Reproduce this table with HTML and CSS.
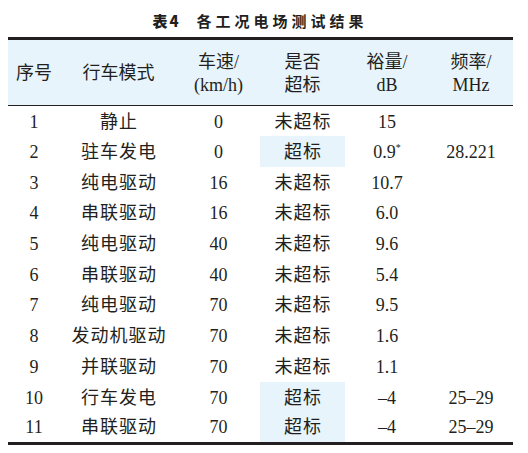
FILE: index.html
```html
<!DOCTYPE html>
<html lang="zh-CN">
<head>
  <meta charset="UTF-8">
  <title>表4 各工况电场测试结果</title>
  <link rel="stylesheet" href="styles.css">
</head>
<body>
  <div class="caption"><b>表4</b><span>各工况电场测试结果</span></div>

  <table class="result">
    <colgroup>
      <col class="c-no">
      <col class="c-mode">
      <col class="c-speed">
      <col class="c-over">
      <col class="c-margin">
      <col class="c-freq">
    </colgroup>
    <thead>
      <tr>
        <th>序号</th>
        <th>行车模式</th>
        <th>车速/<br>(km/h)</th>
        <th>是否<br>超标</th>
        <th>裕量/<br>dB</th>
        <th>频率/<br>MHz</th>
      </tr>
    </thead>
    <tbody>
      <tr><td>1</td><td>静止</td><td>0</td><td>未超标</td><td>15</td><td></td></tr>
      <tr><td>2</td><td>驻车发电</td><td>0</td><td class="hit">超标</td><td>0.9<sup>*</sup></td><td>28.221</td></tr>
      <tr><td>3</td><td>纯电驱动</td><td>16</td><td>未超标</td><td>10.7</td><td></td></tr>
      <tr><td>4</td><td>串联驱动</td><td>16</td><td>未超标</td><td>6.0</td><td></td></tr>
      <tr><td>5</td><td>纯电驱动</td><td>40</td><td>未超标</td><td>9.6</td><td></td></tr>
      <tr><td>6</td><td>串联驱动</td><td>40</td><td>未超标</td><td>5.4</td><td></td></tr>
      <tr><td>7</td><td>纯电驱动</td><td>70</td><td>未超标</td><td>9.5</td><td></td></tr>
      <tr><td>8</td><td>发动机驱动</td><td>70</td><td>未超标</td><td>1.6</td><td></td></tr>
      <tr><td>9</td><td>并联驱动</td><td>70</td><td>未超标</td><td>1.1</td><td></td></tr>
      <tr><td>10</td><td>行车发电</td><td>70</td><td class="hit">超标</td><td>&ndash;4</td><td>25&ndash;29</td></tr>
      <tr><td>11</td><td>串联驱动</td><td>70</td><td class="hit">超标</td><td>&ndash;4</td><td>25&ndash;29</td></tr>
    </tbody>
  </table>
</body>
</html>
```

FILE: styles.css
```css
* {
  margin: 0;
  padding: 0;
  box-sizing: border-box;
}

body {
  background: #ffffff;
  color: #231f20;
  font-family: "Liberation Serif", "Noto Sans CJK SC", serif;
}

.caption {
  height: 37px;
  padding-top: 4px;
  display: flex;
  justify-content: center;
  align-items: center;
  gap: 16px;
  padding-right: 8px;
  font-family: "Noto Sans CJK SC", sans-serif;
  font-size: 15px;
  font-weight: 700;
  letter-spacing: 4px;
}

.caption b {
  letter-spacing: 2px;
}

.result {
  margin-left: 8px;
  width: 505px;
  table-layout: fixed;
  border-collapse: collapse;
  border-top: 3px solid #231f20;
  border-bottom: 3px solid #231f20;
  font-size: 18px;
}

.c-no { width: 52px; }
.c-mode { width: 117px; }
.c-speed { width: 83px; }
.c-over { width: 85px; }
.c-margin { width: 84px; }
.c-freq { width: 84px; }

.result thead tr {
  background: #e7f4fc;
  border-bottom: 1px solid #231f20;
}

.result th {
  height: 67px;
  padding-top: 2px;
  font-weight: normal;
  line-height: 23px;
  text-align: center;
  vertical-align: middle;
}

.result td {
  height: 30.7px;
  padding-top: 1px;
  text-align: center;
  vertical-align: middle;
  line-height: 20px;
}

/* chinese text columns are set a little looser */
.result td:nth-child(2),
.result td:nth-child(4) {
  letter-spacing: 1px;
  text-indent: 1px;
}

.result td.hit {
  background: #e7f4fc;
}

.result sup {
  font-size: 10px;
  vertical-align: 7px;
  line-height: 0;
}
```
